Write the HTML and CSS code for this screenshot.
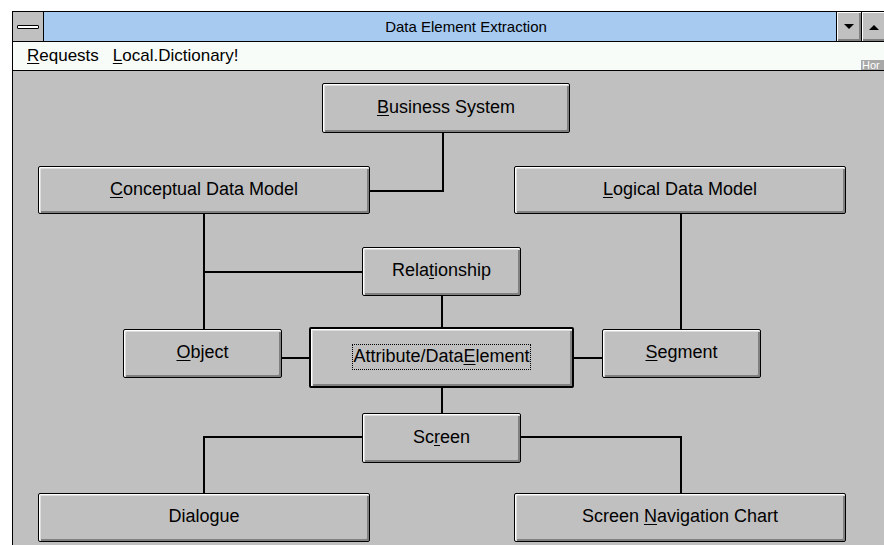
FILE: index.html
```html
<!DOCTYPE html>
<html lang="en">
<head>
    <meta charset="UTF-8">
    <meta name="viewport" content="width=device-width, initial-scale=1.0">
    <link rel="stylesheet" href="styles.css">
    <title>Data Element Extraction</title>
</head>
<body>
    <div class="window">
        <div class="titlebar">
            <div class="sysmenu"><span class="sysbar"></span></div>
            <div class="caption">Data Element Extraction</div>
            <div class="sizebtn">
                <svg width="10" height="6" viewBox="0 0 10 6"><path d="M0 0H10L5 5Z" fill="#000"/></svg>
            </div>
            <div class="sizebtn">
                <svg width="10" height="6" viewBox="0 0 10 6"><path d="M0 6H10L5 1Z" fill="#000"/></svg>
            </div>
        </div>

        <div class="menubar">
            <span class="menuitem"><u>R</u>equests</span>
            <span class="menuitem"><u>L</u>ocal.Dictionary!</span>
            <span class="hscroll">Hor</span>
        </div>

        <div class="client">
            <!-- connectors between the boxes -->
            <svg class="links" width="880" height="480">
                <g fill="none" stroke="#000" stroke-width="2" shape-rendering="crispEdges">
                    <polyline points="430,61 430,120 356,120"/>
                    <line x1="191" y1="142" x2="191" y2="258"/>
                    <line x1="191" y1="201" x2="349" y2="201"/>
                    <line x1="429" y1="224" x2="429" y2="256"/>
                    <line x1="268" y1="287" x2="296" y2="287"/>
                    <line x1="560" y1="287" x2="589" y2="287"/>
                    <line x1="668" y1="142" x2="668" y2="258"/>
                    <line x1="429" y1="316" x2="429" y2="342"/>
                    <polyline points="349,366 191,366 191,422"/>
                    <polyline points="507,366 668,366 668,422"/>
                </g>
            </svg>

            <div class="node" style="left:309px; top:12px; width:248px; height:50px;"><span><u>B</u>usiness System</span></div>
            <div class="node" style="left:25px; top:95px; width:332px; height:48px;"><span><u>C</u>onceptual Data Model</span></div>
            <div class="node" style="left:501px; top:95px; width:332px; height:48px;"><span><u>L</u>ogical Data Model</span></div>
            <div class="node" style="left:349px; top:176px; width:159px; height:49px;"><span>Rela<u>t</u>ionship</span></div>
            <div class="node" style="left:110px; top:258px; width:159px; height:49px;"><span><u>O</u>bject</span></div>
            <div class="node default" style="left:296px; top:256px; width:265px; height:61px;"><span class="focus">Attribute/Data<u>E</u>lement</span></div>
            <div class="node" style="left:589px; top:258px; width:159px; height:49px;"><span><u>S</u>egment</span></div>
            <div class="node" style="left:349px; top:342px; width:159px; height:50px;"><span>Sc<u>r</u>een</span></div>
            <div class="node" style="left:25px; top:422px; width:332px; height:49px;"><span>Dialogue</span></div>
            <div class="node" style="left:501px; top:422px; width:332px; height:49px;"><span>Screen <u>N</u>avigation Chart</span></div>
        </div>
    </div>
</body>
</html>
```

FILE: styles.css
```css
body {
    margin: 0;
    background-color: white;
    font-family: 'Liberation Sans', Arial, sans-serif;
    overflow: hidden;
    height: 545px;
}

.window {
    margin: 11px 0 0 12px;
    width: 900px;
    border-top: 1px solid #000;
    border-left: 1px solid #000;
}

/* title bar */
.titlebar {
    display: flex;
    height: 29px;
    border-bottom: 1px solid #000;
}
.sysmenu {
    width: 30px;
    background-color: #c0c0c0;
    border-right: 1px solid #000;
    display: flex;
    align-items: center;
    justify-content: center;
}
.sysbar {
    width: 20px;
    height: 2px;
    background-color: white;
    border: 1px solid #000;
    border-radius: 1px;
}
.caption {
    flex: 0 0 792px;
    box-sizing: border-box;
    padding-left: 52px;
    background-color: #a6caf0;
    text-align: center;
    font-size: 15px;
    line-height: 29px;
    color: #000;
}
.sizebtn {
    width: 24px;
    border-left: 1px solid #000;
    background-color: #c0c0c0;
    box-shadow: inset 1px 1px #fff, inset -2px -2px #808080;
    display: flex;
    align-items: center;
    justify-content: center;
}

/* menu */
.menubar {
    position: relative;
    height: 28px;
    display: flex;
    align-items: center;
    padding-left: 7px;
    background-color: #f8fcf8;
    border-bottom: 1px solid #000;
    font-size: 17px;
}
.menuitem {
    padding: 0 7px;
}
.hscroll {
    position: absolute;
    left: 848px;
    top: 18px;
    height: 10px;
    width: 22px;
    padding-left: 1px;
    background-color: #a8a8a8;
    color: white;
    font-size: 11px;
    line-height: 10px;
}

/* diagram area */
.client {
    position: relative;
    height: 480px;
    background-color: #c0c0c0;
}
.links {
    position: absolute;
    left: 0;
    top: 0;
}
.node {
    position: absolute;
    box-sizing: border-box;
    display: flex;
    align-items: center;
    justify-content: center;
    background-color: #c0c0c0;
    border: 1px solid #000;
    border-radius: 2px;
    box-shadow: inset 1px 1px #fff, inset 2px 2px #dcdcdc, inset -2px -2px #808080;
    font-size: 18px;
    color: #000;
    padding-bottom: 2px;
}
.node.default {
    border-width: 2px;
}
.focus {
    border: 1px dotted #000;
    padding: 1px 0 2px;
}
u {
    text-underline-offset: 2px;
}
```
